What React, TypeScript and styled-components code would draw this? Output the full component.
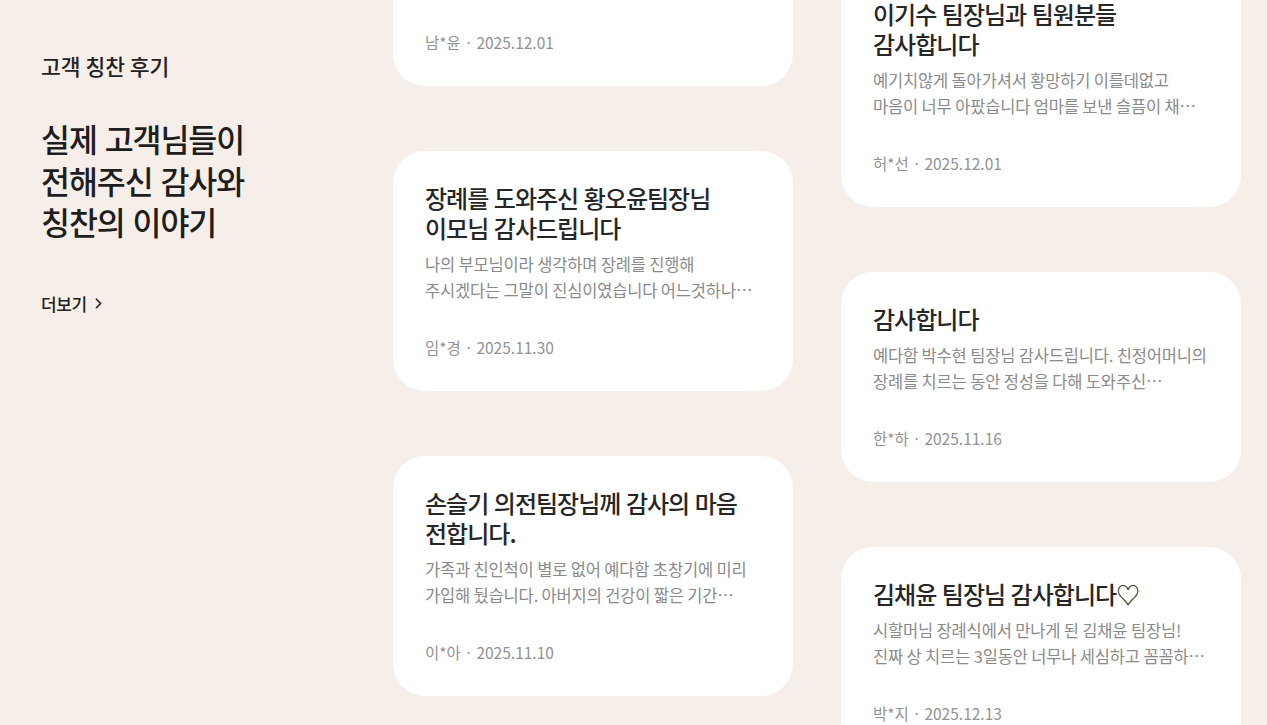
import styled, { createGlobalStyle } from "styled-components";
import { ChevronRight } from "lucide-react";

const GlobalStyle = createGlobalStyle`
  html, body {
    margin: 0;
    padding: 0;
    background: #f6eee8;
  }
  body {
    font-family: "Noto Sans CJK KR", "Noto Sans", sans-serif;
    color: #222;
    -webkit-font-smoothing: antialiased;
  }
  * {
    box-sizing: border-box;
  }
`;

const Page = styled.div`
  display: flex;
  height: 725px;
  overflow: hidden;
  padding-left: 41px;
  background: #f6eee8;
`;

const Intro = styled.section`
  width: 352px;
  flex-shrink: 0;
  padding-top: 51px;
`;

const Eyebrow = styled.h2`
  margin: 0;
  font-size: 21.5px;
  line-height: 29px;
  font-weight: 500;
  color: #222;
  letter-spacing: 0;
`;

const Heading = styled.h1`
  margin: 38px 0 0;
  font-size: 31.5px;
  line-height: 41.5px;
  font-weight: 500;
  color: #1e1e1e;
  letter-spacing: -0.035em;
  word-spacing: 0.06em;
`;

const MoreLink = styled.a`
  margin-top: 49px;
  display: inline-flex;
  align-items: center;
  gap: 3px;
  font-size: 17px;
  line-height: 24px;
  font-weight: 500;
  color: #222;
  text-decoration: none;
  letter-spacing: -0.02em;
  cursor: pointer;
`;

const Columns = styled.div`
  display: flex;
  gap: 48px;
  align-items: flex-start;
`;

const Column = styled.div<{ $offset: number }>`
  width: 400px;
  display: flex;
  flex-direction: column;
  gap: 65px;
  margin-top: ${(p) => -p.$offset}px;
`;

const Card = styled.article`
  background: #fff;
  border-radius: 32px;
  padding: 32px;
`;

const CardTitle = styled.h3`
  margin: 0;
  font-size: 24px;
  line-height: 30px;
  font-weight: 500;
  color: #262626;
  letter-spacing: -0.04em;
  word-spacing: 0.04em;
  word-break: keep-all;
`;

const CardBody = styled.p`
  margin: 8px 0 0;
  font-size: 16.5px;
  line-height: 26px;
  color: #8a8a8a;
  letter-spacing: -0.01em;
  word-break: keep-all;
  display: -webkit-box;
  -webkit-line-clamp: 2;
  -webkit-box-orient: vertical;
  overflow: hidden;
`;

const Meta = styled.div`
  margin-top: 32px;
  font-size: 15.5px;
  line-height: 24px;
  color: #929292;
  letter-spacing: 0;
`;

interface Review {
  title: string;
  body: string;
  name: string;
  date: string;
}

const middle: Review[] = [
  {
    title: "예다함 장례지도사님께 진심으로 감사드립니다",
    body: "갑작스러운 이별에 경황이 없던 저희 가족을 처음부터 끝까지 따뜻하게 챙겨주셨습니다.",
    name: "남*윤",
    date: "2025.12.01",
  },
  {
    title: "장례를 도와주신 황오윤팀장님 이모님 감사드립니다",
    body: "나의 부모님이라 생각하며 장례를 진행해 주시겠다는 그말이 진심이였습니다 어느것하나 소홀함 없이 챙겨주셨습니다.",
    name: "임*경",
    date: "2025.11.30",
  },
  {
    title: "손슬기 의전팀장님께 감사의 마음 전합니다.",
    body: "가족과 친인척이 별로 없어 예다함 초창기에 미리 가입해 뒀습니다. 아버지의 건강이 짧은 기간 급격하게 나빠지셨습니다.",
    name: "이*아",
    date: "2025.11.10",
  },
];

const right: Review[] = [
  {
    title: "이기수 팀장님과 팀원분들 감사합니다",
    body: "예기치않게 돌아가셔서 황망하기 이를데없고 마음이 너무 아팠습니다 엄마를 보낸 슬픔이 채 가시기도 전에 장례를 치러야 했습니다.",
    name: "허*선",
    date: "2025.12.01",
  },
  {
    title: "감사합니다",
    body: "예다함 박수현 팀장님 감사드립니다. 친정어머니의 장례를 치르는 동안 정성을 다해 도와주신 팀장님께서는 늘 곁에 계셨습니다.",
    name: "한*하",
    date: "2025.11.16",
  },
  {
    title: "김채윤 팀장님 감사합니다♡",
    body: "시할머님 장례식에서 만나게 된 김채윤 팀장님! 진짜 상 치르는 3일동안 너무나 세심하고 꼼꼼하게 챙겨주셔서 감사했습니다.",
    name: "박*지",
    date: "2025.12.13",
  },
];

function ReviewCard({ review }: { review: Review }) {
  return (
    <Card>
      <CardTitle>{review.title}</CardTitle>
      <CardBody>{review.body}</CardBody>
      <Meta>
        {review.name} · {review.date}
      </Meta>
    </Card>
  );
}

export default function App() {
  return (
    <>
      <GlobalStyle />
      <Page>
        <Intro>
          <Eyebrow>고객 칭찬 후기</Eyebrow>
          <Heading>
            실제 고객님들이
            <br />
            전해주신 감사와
            <br />
            칭찬의 이야기
          </Heading>
          <MoreLink>
            더보기 <ChevronRight size={17} strokeWidth={2.4} />
          </MoreLink>
        </Intro>
        <Columns>
          <Column $offset={154}>
            {middle.map((r) => (
              <ReviewCard key={r.name + r.date} review={r} />
            ))}
          </Column>
          <Column $offset={33}>
            {right.map((r) => (
              <ReviewCard key={r.name + r.date} review={r} />
            ))}
          </Column>
        </Columns>
      </Page>
    </>
  );
}
